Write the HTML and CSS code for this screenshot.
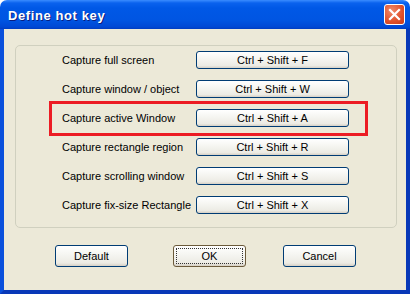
FILE: index.html
```html
<!doctype html>
<html>
<head>
  <meta charset="utf-8" />
  <title>Define hot key</title>
  <link rel="stylesheet" href="styles.css">
</head>
<body>
  <div class="window">
    <div class="titlebar">
      <span class="title">Define hot key</span>
      <div class="close">
        <svg width="13" height="13" viewBox="0 0 13 13">
          <path d="M2 2 L11 11 M11 2 L2 11" stroke="#fff" stroke-width="2.2" stroke-linecap="square" fill="none"/>
        </svg>
      </div>
    </div>
    <div class="client">
      <div class="group">
        <div class="row"><span class="label">Capture full screen</span><span class="key">Ctrl + Shift + F</span></div>
        <div class="row"><span class="label">Capture window / object</span><span class="key">Ctrl + Shift + W</span></div>
        <div class="row"><span class="label">Capture active Window</span><span class="key">Ctrl + Shift + A</span></div>
        <div class="row"><span class="label">Capture rectangle region</span><span class="key">Ctrl + Shift + R</span></div>
        <div class="row"><span class="label">Capture scrolling window</span><span class="key">Ctrl + Shift + S</span></div>
        <div class="row"><span class="label">Capture fix-size Rectangle</span><span class="key">Ctrl + Shift + X</span></div>
        <div class="highlight"></div>
      </div>
      <div class="actions">
        <span class="btn">Default</span>
        <span class="btn btn-ok">OK</span>
        <span class="btn btn-cancel">Cancel</span>
      </div>
    </div>
  </div>
</body>
</html>
```

FILE: styles.css
```css
body {
  margin: 0;
  background: #fff;
  font-family: 'Liberation Sans', Arial, sans-serif;
  font-size: 11px;
  color: #000;
}
.window {
  width: 410px;
  height: 294px;
  display: flex;
  flex-direction: column;
}
.titlebar {
  height: 29px;
  flex: none;
  display: flex;
  align-items: center;
  justify-content: space-between;
  padding: 0 5px 0 8px;
  box-sizing: border-box;
  border-radius: 7px 7px 0 0;
  background: linear-gradient(#3a8cff 0px, #0a62ee 3px, #0058e6 8px, #0055e2 20px, #0048d4 27px, #003cc0 29px);
}
.title {
  color: #fff;
  font-family: 'Liberation Sans', Arial, sans-serif;
  font-weight: bold;
  font-size: 13px;
  letter-spacing: 0.6px;
  text-shadow: 1px 1px 0 #0a1e80;
  margin-top: 1px;
}
.close {
  width: 21px;
  height: 21px;
  box-sizing: border-box;
  border: 1px solid #fff;
  border-radius: 3px;
  background: radial-gradient(circle at 35% 30%, #f08a6a, #e0502a 60%, #c83a18);
  display: flex;
  align-items: center;
  justify-content: center;
}
.client {
  flex: 1;
  background: #ece9d8;
  border: 4px solid #0054e3;
  border-top: none;
  border-left-color: #0a50dc;
  border-bottom-color: #0838b8;
  border-right-color: #0838b8;
  padding: 16px 9px 0 11px;
  box-sizing: border-box;
}
.group {
  position: relative;
  height: 183px;
  box-sizing: border-box;
  border: 1px solid #d0d0bf;
  border-radius: 5px;
  padding: 5px 0 0 46px;
  display: flex;
  flex-direction: column;
  gap: 11px;
}
.row {
  display: flex;
  align-items: center;
  height: 18px;
}
.label {
  width: 134px;
  flex: none;
  white-space: nowrap;
}
.key, .btn {
  box-sizing: border-box;
  border: 1px solid #003c74;
  border-radius: 3px;
  background: linear-gradient(#ffffff, #f6f6f2 40%, #ecebe4 85%, #d6d0c5);
  display: flex;
  align-items: center;
  justify-content: center;
}
.key {
  width: 153px;
  height: 18px;
}
.highlight {
  position: absolute;
  left: 33px;
  top: 55px;
  width: 319px;
  height: 35px;
  box-sizing: border-box;
  border: 3px solid #ec1c24;
}
.actions {
  display: flex;
  margin-top: 17px;
  padding-left: 40px;
}
.btn {
  width: 73px;
  height: 22px;
}
.btn-ok {
  margin-left: 45px;
  position: relative;
  border-color: #6b5a3a;
}
.btn-ok::after {
  content: '';
  position: absolute;
  inset: 2px;
  border: 1px dotted #333;
}
.btn-cancel {
  margin-left: 37px;
}
```
